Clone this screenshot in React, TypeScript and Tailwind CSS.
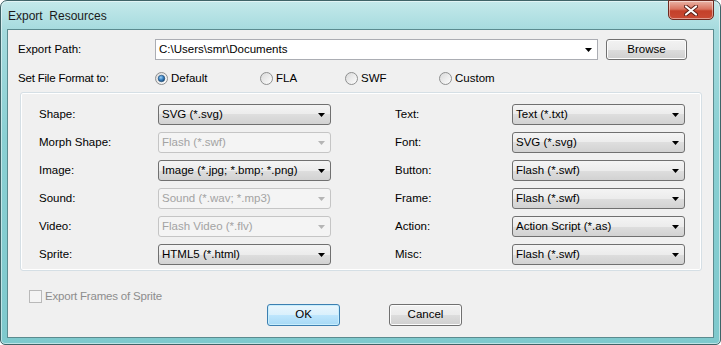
import React from 'react'

const leftRows = [
  { label: 'Shape:', value: 'SVG (*.svg)', disabled: false },
  { label: 'Morph Shape:', value: 'Flash (*.swf)', disabled: true },
  { label: 'Image:', value: 'Image (*.jpg; *.bmp; *.png)', disabled: false },
  { label: 'Sound:', value: 'Sound (*.wav; *.mp3)', disabled: true },
  { label: 'Video:', value: 'Flash Video (*.flv)', disabled: true },
  { label: 'Sprite:', value: 'HTML5 (*.html)', disabled: false },
]

const rightRows = [
  { label: 'Text:', value: 'Text (*.txt)', disabled: false },
  { label: 'Font:', value: 'SVG (*.svg)', disabled: false },
  { label: 'Button:', value: 'Flash (*.swf)', disabled: false },
  { label: 'Frame:', value: 'Flash (*.swf)', disabled: false },
  { label: 'Action:', value: 'Action Script (*.as)', disabled: false },
  { label: 'Misc:', value: 'Flash (*.swf)', disabled: false },
]

const formats = [
  { label: 'Default', checked: true, width: 'w-[105px]' },
  { label: 'FLA', checked: false, width: 'w-[85px]' },
  { label: 'SWF', checked: false, width: 'w-[94px]' },
  { label: 'Custom', checked: false, width: 'w-[80px]' },
]

function Arrow({ color }: { color: string }) {
  return (
    <svg width="7" height="4" viewBox="0 0 7 4" aria-hidden="true">
      <path d="M0 0h7L3.5 4z" fill={color} />
    </svg>
  )
}

function Combo({ value, disabled }: { value: string; disabled: boolean }) {
  return (
    <div
      className={`h-[21px] flex-1 flex items-center justify-between rounded-[3px] border pl-[3px] pr-[5px] ${
        disabled
          ? 'border-[#c5c5c5] bg-[#f4f4f4] text-[#a3a3a3]'
          : 'border-[#707070] bg-[linear-gradient(#f4f4f4_0%,#ececec_50%,#dedede_50%,#d2d2d2_100%)] text-black'
      }`}
    >
      <span className="whitespace-nowrap">{value}</span>
      <Arrow color={disabled ? '#b5b5b5' : '#000'} />
    </div>
  )
}

function Radio({ checked }: { checked: boolean }) {
  return (
    <svg width="13" height="13" viewBox="0 0 13 13" aria-hidden="true">
      <defs>
        <linearGradient id="rbg" x1="0" y1="0" x2="1" y2="1">
          <stop offset="0" stopColor="#d8d8d8" />
          <stop offset="1" stopColor="#ffffff" />
        </linearGradient>
        <radialGradient id="rdot" cx="0.4" cy="0.35" r="0.7">
          <stop offset="0" stopColor="#9fd0f5" />
          <stop offset="0.5" stopColor="#3a83c4" />
          <stop offset="1" stopColor="#143f6a" />
        </radialGradient>
      </defs>
      <circle cx="6.5" cy="6.5" r="6" fill="url(#rbg)" stroke="#8e8f8f" strokeWidth="1" />
      {checked && <circle cx="6.5" cy="6.5" r="3.3" fill="url(#rdot)" stroke="#1d4b75" strokeWidth="0.6" />}
    </svg>
  )
}

function Button({ children, primary }: { children: React.ReactNode; primary?: boolean }) {
  return (
    <button
      className={`h-[22px] w-[73px] rounded-[3px] border text-black ${
        primary
          ? 'border-[#3c7fb1] bg-[linear-gradient(#eaf6fd_0%,#d9f0fc_50%,#bee6fd_50%,#a7d9f5_100%)] shadow-[inset_0_0_0_1px_#c8eefd]'
          : 'border-[#707070] bg-[linear-gradient(#f2f2f2_0%,#ebebeb_50%,#dddddd_50%,#cfcfcf_100%)] shadow-[inset_0_0_0_1px_#fcfcfc]'
      }`}
    >
      {children}
    </button>
  )
}

function Column({ rows, labelW, comboW }: { rows: typeof leftRows; labelW: string; comboW: string }) {
  return (
    <div className="flex flex-col gap-[7px]">
      {rows.map((r) => (
        <div key={r.label} className="flex items-center h-[21px]">
          <span className={`${labelW} whitespace-nowrap text-black`}>{r.label}</span>
          <div className={`${comboW} flex`}>
            <Combo value={r.value} disabled={r.disabled} />
          </div>
        </div>
      ))}
    </div>
  )
}

export default function App() {
  return (
    <div className="w-[721px] h-[345px] font-['Liberation_Sans',Arial,sans-serif] text-[11.5px] leading-none">
      <div className="h-full flex flex-col rounded-t-[7px] rounded-b-[5px] border border-[#3f6468] bg-[linear-gradient(180deg,#c4e9eb_0%,#a4dadd_9%,#8ad0d3_40%,#7ec9cd_100%)] shadow-[inset_0_0_0_1px_rgba(255,255,255,0.5)]">
        {/* Title bar */}
        <div className="h-[28px] flex items-start justify-between">
          <span className="mt-[9px] ml-[7px] text-[12px] text-[#1b1b1b] whitespace-pre">Export  Resources</span>
          <div className="-mt-px mr-[6px] h-[20px] w-[46px] flex items-center justify-center rounded-b-[5px] border border-[#6e2a20] bg-[linear-gradient(#eab4a6_0%,#d9735f_45%,#c4402a_55%,#c94a34_100%)] shadow-[inset_0_0_0_1px_rgba(255,255,255,0.45)]">
            <svg width="14" height="11" viewBox="0 0 14 11" aria-hidden="true">
              <path d="M2 1.5L12 9.5M12 1.5L2 9.5" stroke="#5a1e16" strokeWidth="4" strokeLinecap="round" />
              <path d="M2 1.5L12 9.5M12 1.5L2 9.5" stroke="#ffffff" strokeWidth="2.2" strokeLinecap="round" />
            </svg>
          </div>
        </div>

        {/* Client area */}
        <div className="flex-1 mx-[6px] mb-[6px] border border-[#5b8b8f] bg-[#f0f0f0]">
          <div className="flex items-center pt-[9px] pl-[10px]">
            <span className="w-[137px] text-black">Export Path:</span>
            <div className="w-[443px] h-[21px] flex items-center justify-between border border-[#abadb3] bg-white pl-[3px] pr-[5px] text-black">
              <span>C:\Users\smr\Documents</span>
              <Arrow color="#000" />
            </div>
            <div className="ml-[8px]">
              <button className="h-[21px] w-[81px] rounded-[3px] border border-[#707070] bg-[linear-gradient(#f2f2f2_0%,#ebebeb_50%,#dddddd_50%,#cfcfcf_100%)] shadow-[inset_0_0_0_1px_#fcfcfc] text-black">
                Browse
              </button>
            </div>
          </div>

          <div className="flex items-center h-[13px] mt-[12px] pl-[10px]">
            <span className="w-[137px] text-black tracking-[-0.2px]">Set File Format to:</span>
            {formats.map((f) => (
              <div key={f.label} className={`${f.width} flex items-center gap-[3px]`}>
                <Radio checked={f.checked} />
                <span className="text-black">{f.label}</span>
              </div>
            ))}
          </div>

          {/* Group box */}
          <div className="mt-[7px] ml-[12px] w-[682px] h-[179px] rounded-[3px] border border-[#d5dfe5] shadow-[inset_0_0_0_1px_#ffffff] pt-[11px] pl-[18px] flex">
            <Column rows={leftRows} labelW="w-[119px]" comboW="w-[173px]" />
            <div className="ml-[64px]">
              <Column rows={rightRows} labelW="w-[117px]" comboW="w-[173px]" />
            </div>
          </div>

          <div className="mt-[19px] ml-[21px] h-[13px] flex items-center gap-[3px]">
            <div className="w-[13px] h-[13px] border border-[#b9b9b9] bg-[#f4f4f4]" />
            <span className="text-[#8d8d8d] tracking-[-0.2px]">Export Frames of Sprite</span>
          </div>

          <div className="mt-[1px] ml-[259px] flex gap-[49px]">
            <Button primary>OK</Button>
            <Button>Cancel</Button>
          </div>
        </div>
      </div>
    </div>
  )
}
